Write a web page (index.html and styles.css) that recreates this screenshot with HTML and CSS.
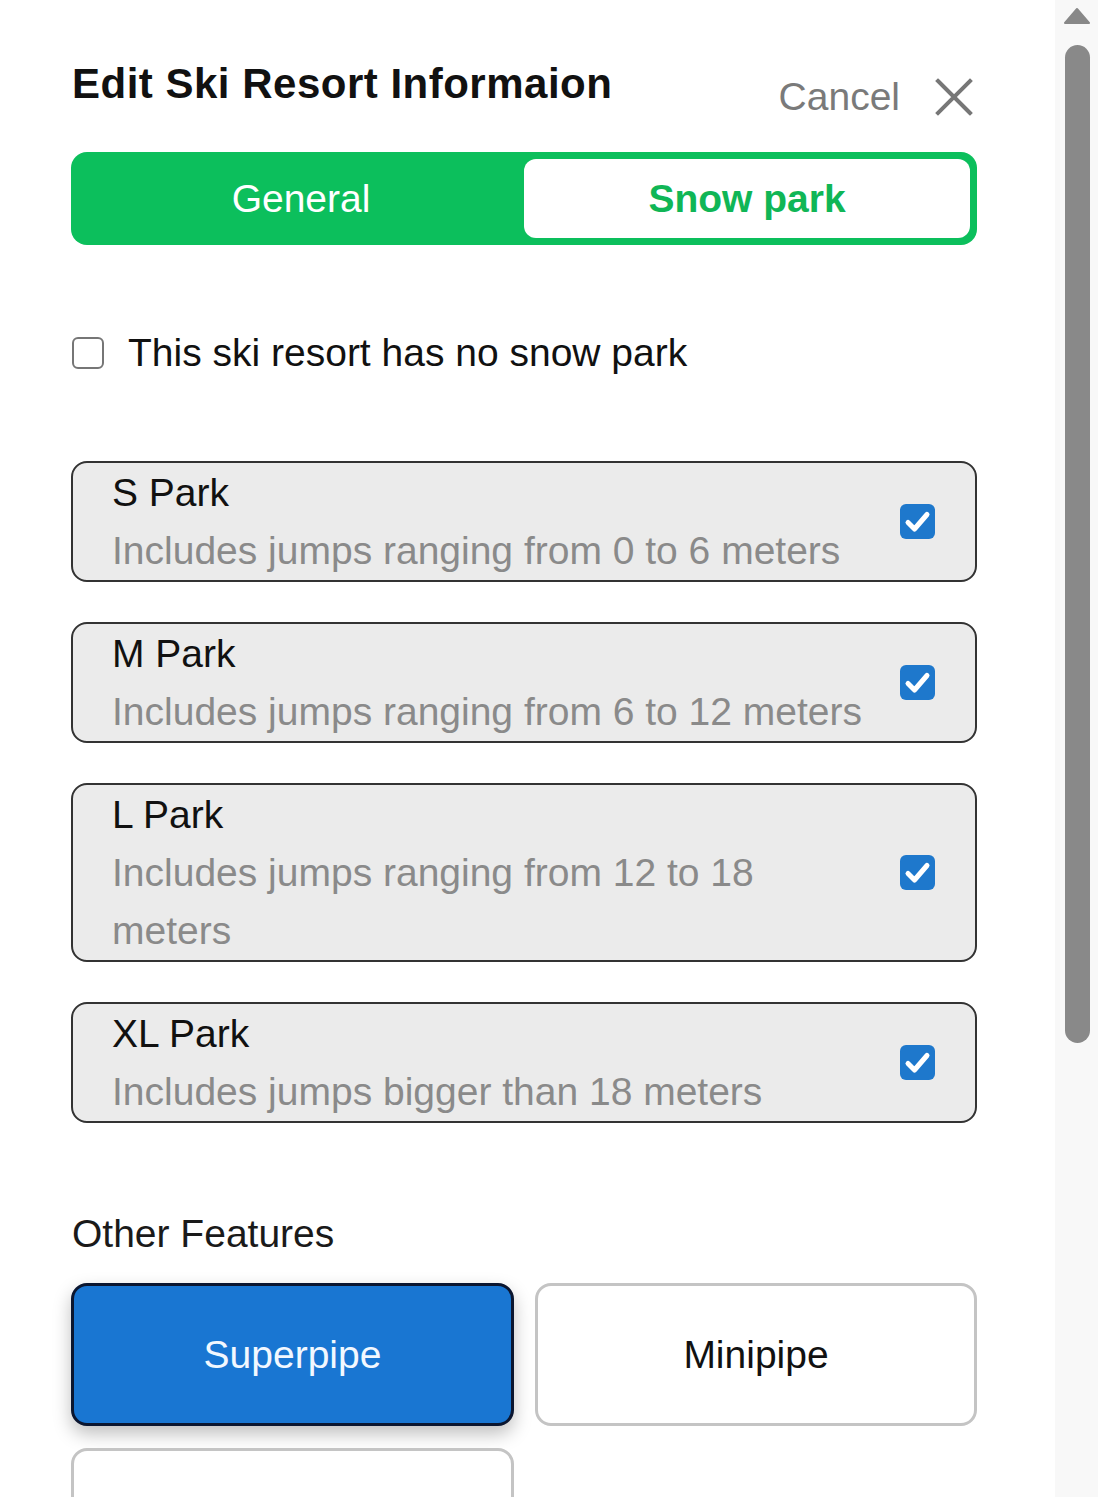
FILE: index.html
```html
<!DOCTYPE html>
<html lang="en">
<head>
<meta charset="utf-8">
<title>Edit Ski Resort Informaion</title>
<link rel="stylesheet" href="styles.css">
</head>
<body>
<main class="panel">
  <header class="header">
    <h1 class="title">Edit Ski Resort Informaion</h1>
    <button class="cancel" type="button">
      <span class="cancel-label">Cancel</span>
      <svg class="cancel-icon" viewBox="0 0 38 38" aria-hidden="true">
        <path d="M3 3 L35 35 M35 3 L3 35" />
      </svg>
    </button>
  </header>

  <nav class="tabs">
    <div class="tab">General</div>
    <div class="tab tab-active">Snow park</div>
  </nav>

  <label class="no-park">
    <span class="box"></span>
    <span class="no-park-text">This ski resort has no snow park</span>
  </label>

  <section class="parks">
    <div class="park">
      <div class="park-text">
        <div class="park-name">S Park</div>
        <div class="park-desc">Includes jumps ranging from 0 to 6 meters</div>
      </div>
      <span class="check"><svg viewBox="0 0 35 35" aria-hidden="true"><path d="M8 18.5 L14.5 25 L27 10.5" /></svg></span>
    </div>
    <div class="park">
      <div class="park-text">
        <div class="park-name">M Park</div>
        <div class="park-desc">Includes jumps ranging from 6 to 12 meters</div>
      </div>
      <span class="check"><svg viewBox="0 0 35 35" aria-hidden="true"><path d="M8 18.5 L14.5 25 L27 10.5" /></svg></span>
    </div>
    <div class="park">
      <div class="park-text">
        <div class="park-name">L Park</div>
        <div class="park-desc">Includes jumps ranging from 12 to 18 meters</div>
      </div>
      <span class="check"><svg viewBox="0 0 35 35" aria-hidden="true"><path d="M8 18.5 L14.5 25 L27 10.5" /></svg></span>
    </div>
    <div class="park">
      <div class="park-text">
        <div class="park-name">XL Park</div>
        <div class="park-desc">Includes jumps bigger than 18 meters</div>
      </div>
      <span class="check"><svg viewBox="0 0 35 35" aria-hidden="true"><path d="M8 18.5 L14.5 25 L27 10.5" /></svg></span>
    </div>
  </section>

  <h2 class="features-title">Other Features</h2>
  <section class="features">
    <button class="feature feature-on" type="button">Superpipe</button>
    <button class="feature" type="button">Minipipe</button>
    <button class="feature" type="button">&nbsp;</button>
    <div class="feature-spacer"></div>
  </section>
</main>

<div class="scrollbar" aria-hidden="true">
  <svg class="scroll-arrow" viewBox="0 0 28 18"><path d="M14 2 L26 16 L2 16 Z" /></svg>
  <div class="scroll-thumb"></div>
</div>
</body>
</html>
```

FILE: styles.css
```css
html, body {
  margin: 0;
  padding: 0;
  height: 100%;
  overflow: hidden;
  background: #ffffff;
}

body {
  font-family: "Liberation Sans", Arial, sans-serif;
  color: #111111;
}

.panel {
  width: 906px;
  padding: 0 0 0 71px;
}

.header {
  display: flex;
  justify-content: space-between;
  align-items: flex-start;
  padding-top: 60px;
  height: 92px;
}

.title {
  margin: 0;
  font-size: 42px;
  line-height: 48px;
  font-weight: 700;
  letter-spacing: 0.5px;
  color: #111111;
  padding-left: 1px;
}

.cancel {
  display: flex;
  align-items: center;
  gap: 35px;
  margin-top: 15px;
  margin-right: 4px;
  padding: 0;
  border: 0;
  background: none;
  font-family: inherit;
  cursor: pointer;
}

.cancel-label {
  font-size: 39px;
  line-height: 44px;
  color: #7a7a7a;
}

.cancel-icon {
  width: 38px;
  height: 38px;
  fill: none;
  stroke: #777777;
  stroke-width: 4;
  stroke-linecap: square;
}

.tabs {
  display: flex;
  height: 79px;
  padding: 7px;
  background: #0cbf5c;
  border-radius: 16px;
}

.tab {
  flex: 1;
  display: flex;
  align-items: center;
  justify-content: center;
  font-size: 39px;
  color: #ffffff;
  border-radius: 12px;
}

.tab-active {
  background: #ffffff;
  color: #10b656;
  font-weight: 700;
}

.no-park {
  display: flex;
  align-items: center;
  gap: 24px;
  margin-top: 86px;
  padding-left: 1px;
  height: 44px;
}

.box {
  width: 28px;
  height: 28px;
  border: 2px solid #767676;
  border-radius: 6px;
  background: #ffffff;
}

.no-park-text {
  font-size: 39px;
  line-height: 44px;
  color: #111111;
}

.parks {
  display: flex;
  flex-direction: column;
  gap: 40px;
  margin-top: 86px;
}

.park {
  display: flex;
  align-items: center;
  gap: 20px;
  padding: 0 40px 0 39px;
  border: 2px solid #333333;
  border-radius: 16px;
  background: #ebebeb;
}

.park-text {
  flex: 1;
  min-width: 0;
  padding: 0.5px 0;
}

.park-name {
  font-size: 39px;
  line-height: 58px;
  color: #111111;
}

.park-desc {
  font-size: 39px;
  line-height: 58px;
  color: #8a8a8a;
}

.check {
  flex: none;
  width: 35px;
  height: 35px;
  border-radius: 6px;
  background: #1e78cc;
  display: flex;
}

.check svg {
  width: 35px;
  height: 35px;
  fill: none;
  stroke: #ffffff;
  stroke-width: 5;
  stroke-linecap: round;
  stroke-linejoin: round;
}

.features-title {
  margin: 89px 0 0 1px;
  font-size: 39px;
  line-height: 44px;
  font-weight: 400;
  color: #1a1a1a;
}

.features {
  display: grid;
  grid-template-columns: 443px 442px;
  column-gap: 21px;
  row-gap: 22px;
  margin-top: 27px;
}

.feature {
  height: 143px;
  border: 3px solid #c4c4c4;
  border-radius: 16px;
  background: #ffffff;
  font-family: inherit;
  font-size: 39px;
  color: #111111;
  padding: 0;
}

.feature-on {
  background: #1976d2;
  border-color: #0b1630;
  color: #f2f8ff;
  box-shadow: 0 8px 18px rgba(0, 0, 0, 0.25);
}

.scrollbar {
  position: fixed;
  top: 0;
  right: 0;
  width: 43px;
  height: 100%;
  background: #f8f8f8;
}

.scroll-arrow {
  position: absolute;
  top: 7px;
  left: 8px;
  width: 28px;
  height: 18px;
  fill: #888888;
  stroke: #888888;
  stroke-width: 2;
  stroke-linejoin: round;
}

.scroll-thumb {
  position: absolute;
  top: 45px;
  left: 10px;
  width: 25px;
  height: 998px;
  border-radius: 13px;
  background: #898989;
}
```
